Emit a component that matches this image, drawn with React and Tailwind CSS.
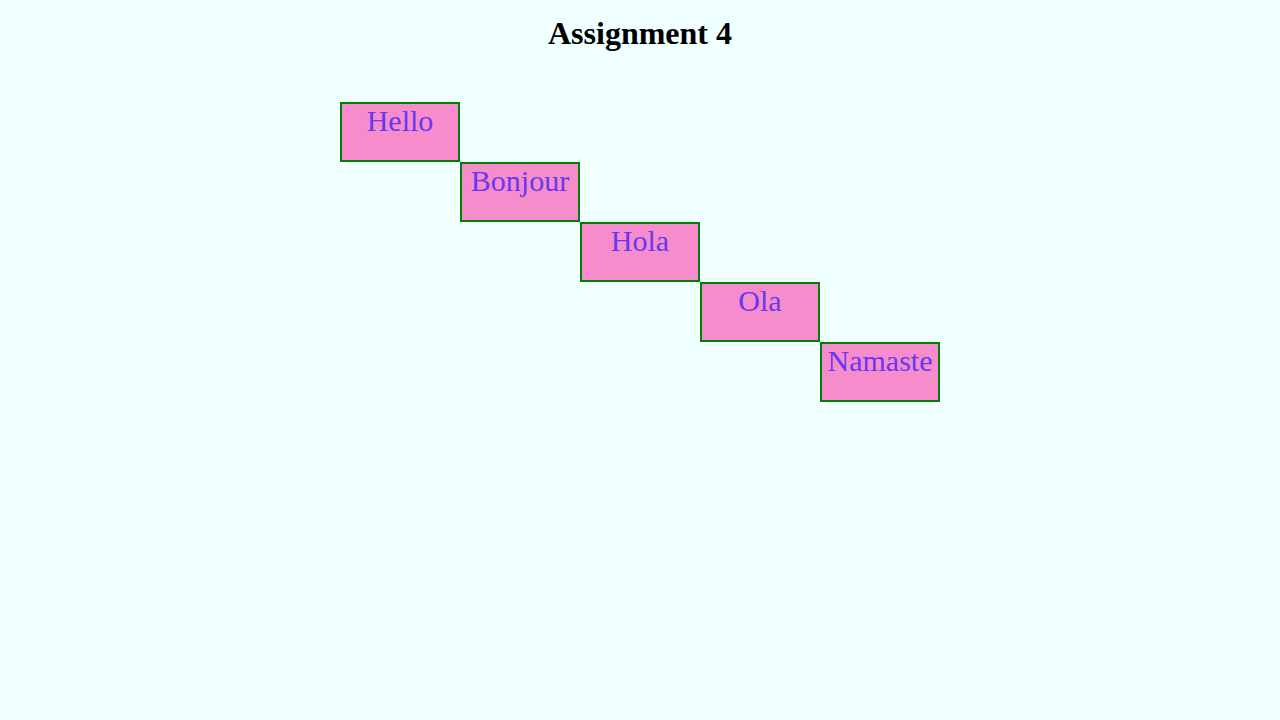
const greetings = [
  { text: "Hello", offset: "ml-[340px]" },
  { text: "Bonjour", offset: "ml-[460px]" },
  { text: "Hola", offset: "ml-[580px]" },
  { text: "Ola", offset: "ml-[700px]" },
  { text: "Namaste", offset: "ml-[820px]" },
];

export default function App() {
  return (
    <div className="min-h-screen w-full bg-[#f0ffff] font-['Liberation_Serif','Times_New_Roman',serif] text-black">
      <h1 className="pt-[15px] text-center text-[32px] font-bold leading-[37px]">
        Assignment 4
      </h1>
      <div className="mt-[50px] flex flex-col">
        {greetings.map((g) => (
          <div
            key={g.text}
            className={`${g.offset} h-[60px] w-[120px] border-2 border-[#008000] bg-[#f78ccc] text-center text-[30px] leading-[34px] text-[#6638f2]`}
          >
            {g.text}
          </div>
        ))}
      </div>
    </div>
  );
}
